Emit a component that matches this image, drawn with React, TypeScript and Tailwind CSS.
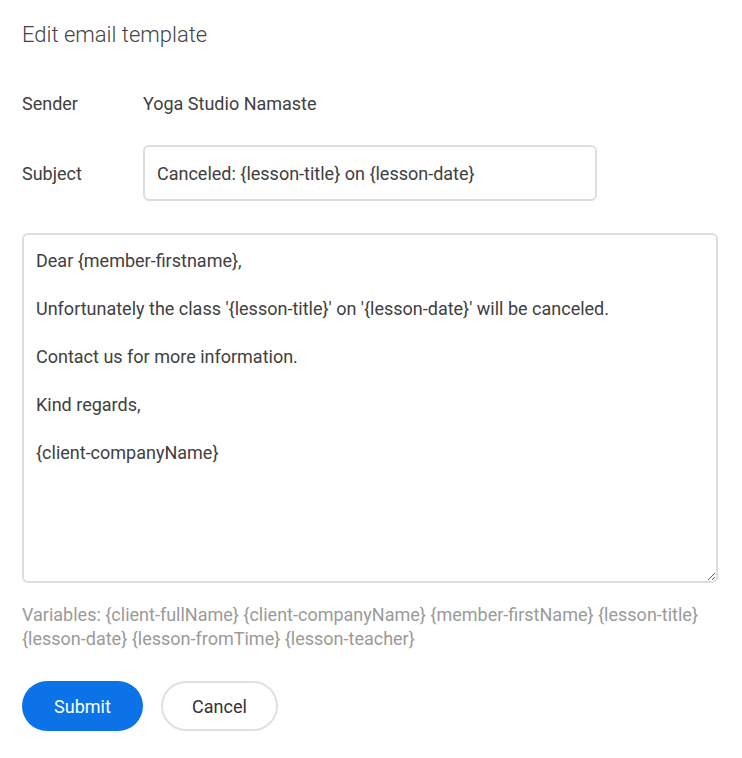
const body = `Dear {member-firstname},

Unfortunately the class '{lesson-title}' on '{lesson-date}' will be canceled.

Contact us for more information.

Kind regards,

{client-companyName}`;

const variables = [
  '{client-fullName}',
  '{client-companyName}',
  '{member-firstName}',
  '{lesson-title}',
  '{lesson-date}',
  '{lesson-fromTime}',
  '{lesson-teacher}',
];

export default function App() {
  return (
    <div className="min-h-screen bg-white px-[22px] pt-[21px] font-['Roboto',sans-serif] text-[#404040]">
      {/* Header */}
      <h1 className="text-[22px] leading-[28px] font-light text-[#444]">Edit email template</h1>

      {/* Sender */}
      <div className="mt-[43px] flex items-center text-[18px] leading-[24px]">
        <span className="w-[121px]">Sender</span>
        <span>Yoga Studio Namaste</span>
      </div>

      {/* Subject */}
      <div className="mt-[29px] flex items-center text-[18px]">
        <label className="w-[121px]">Subject</label>
        <input
          className="h-[56px] w-[454px] rounded-[6px] border-2 border-[#dedede] px-[12px] text-[18px] text-[#404040] outline-none"
          defaultValue="Canceled: {lesson-title} on {lesson-date}"
        />
      </div>

      {/* Body */}
      <textarea
        className="mt-[32px] block h-[350px] w-[696px] rounded-[6px] border-2 border-[#dedede] px-[12px] pt-[14px] pb-[12px] text-[18px] leading-[24px] text-[#404040] outline-none"
        defaultValue={body}
      />

      <p className="mt-[20px] text-[18px] leading-[24px] text-[#9a9a9a]">
        Variables:{' '}
        {variables.map((v, i) => (
          <span key={v}>
            <span className="whitespace-nowrap">{v}</span>
            {i < variables.length - 1 ? ' ' : ''}
          </span>
        ))}
      </p>

      {/* Actions */}
      <div className="mt-[30px] flex items-center gap-[18px]">
        <button className="h-[50px] w-[121px] rounded-full bg-[#0b72e7] text-[18px] text-white">Submit</button>
        <button className="h-[50px] w-[117px] rounded-full border-2 border-[#dfe1e1] bg-white text-[18px] text-[#333]">Cancel</button>
      </div>
    </div>
  );
}
